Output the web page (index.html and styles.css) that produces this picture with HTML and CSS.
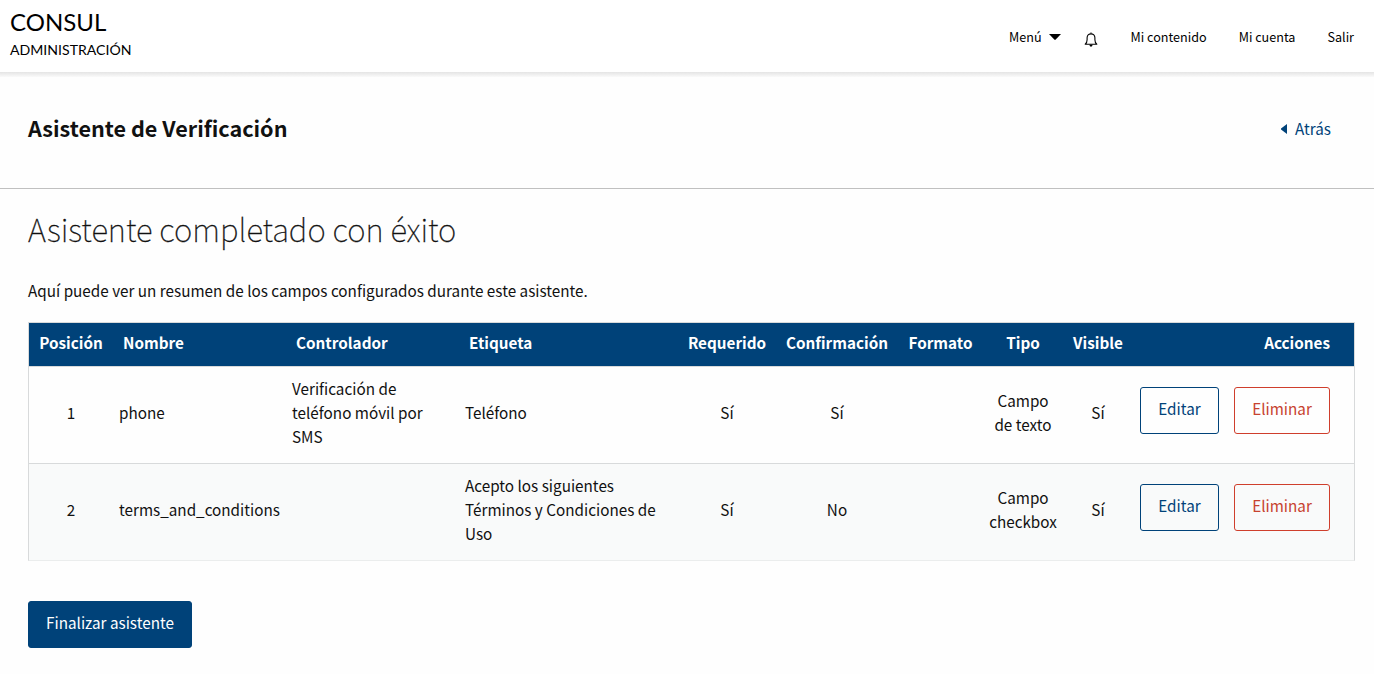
FILE: index.html
```html
<!DOCTYPE html>
<html lang="es">
<head>
<meta charset="utf-8">
<title>Asistente de Verificación</title>
<link rel="stylesheet" href="styles.css">
</head>
<body>
<header class="top">
  <div class="brand">
    <a class="brand-name">CONSUL</a>
    <a class="brand-sub">ADMINISTRACIÓN</a>
  </div>
  <nav class="nav">
    <a class="nav-menu"><span class="t-menu">Menú</span><svg class="caret" width="12" height="6" viewBox="0 0 12 6"><path d="M0 0h12L6.500 5.700h-1z"/></svg></a>
    <svg class="bell" width="14" height="15" viewBox="0 0 14 15" fill="none" stroke="#000" stroke-width="1.1" stroke-linejoin="round"><path d="M7 .4v1.4M1.2 12.200h11.600c-1.300-1-1.900-2.300-1.900-4.400V5.800C10.900 3.500 9.300 1.900 7 1.900S3.100 3.500 3.100 5.800v2c0 2.100-.6 3.400-1.900 4.400z"/><path d="M5.300 12.800h3.400l-.8 1.600H6.100z" fill="#000" stroke="none"/></svg>
    <a class="t-contenido">Mi contenido</a>
    <a class="t-cuenta">Mi cuenta</a>
    <a class="t-salir">Salir</a>
  </nav>
</header>
<section class="title-bar">
  <h2 class="title"><span>Asistente de Verificación</span></h2>
  <a class="back"><svg width="6" height="10" viewBox="0 0 6 10"><path d="M6 0v10L0 5.500v-1z" fill="#004279"/></svg><span>Atrás</span></a>
</section>
<main class="main">
  <h1 class="heading"><span>Asistente completado con éxito</span></h1>
  <p class="intro"><span>Aquí puede ver un resumen de los campos configurados durante este asistente.</span></p>
  <table class="fields">
    <colgroup><col class="c-pos"><col class="c-name"><col class="c-name"><col class="c-label"><col class="c-req"><col class="c-conf"><col class="c-fmt"><col class="c-type"><col class="c-vis"><col class="c-act"></colgroup>
    <thead>
      <tr><th class="mid">Posición</th><th>Nombre</th><th>Controlador</th><th>Etiqueta</th><th class="mid">Requerido</th><th class="mid">Confirmación</th><th class="mid">Formato</th><th class="mid">Tipo</th><th class="mid">Visible</th><th class="end">Acciones</th></tr>
    </thead>
    <tbody>
      <tr><td class="mid">1</td><td>phone</td><td>Verificación de<br>teléfono móvil por<br>SMS</td><td>Teléfono</td><td class="mid">Sí</td><td class="mid">Sí</td><td></td><td class="mid">Campo<br>de texto</td><td class="mid">Sí</td><td class="cell-actions"><div class="actions"><a class="button edit">Editar</a><a class="button delete">Eliminar</a></div></td></tr>
      <tr><td class="mid">2</td><td>terms_and_conditions</td><td></td><td>Acepto los siguientes<br>Términos y Condiciones de<br>Uso</td><td class="mid">Sí</td><td class="mid">No</td><td></td><td class="mid">Campo<br>checkbox</td><td class="mid">Sí</td><td class="cell-actions"><div class="actions"><a class="button edit">Editar</a><a class="button delete">Eliminar</a></div></td></tr>
    </tbody>
  </table>
  <a class="button finish">Finalizar asistente</a>
</main>
</body>
</html>
```
FILE: styles.css
```css
* { box-sizing: border-box; }
body {
  margin: 0;
  background: #fefefe;
  color: #111;
  font: 15.270px/24px "Noto Sans CJK SC", "Noto Sans", sans-serif;
  white-space: nowrap;
}
.top {
  height: 72px;
  display: flex;
  justify-content: space-between;
  background: #fff;
  color: #000;
}
.brand { padding: 4px 10px; display: flex; flex-direction: column; font-family: Lato, sans-serif; }
.brand-name { font-size: 24px; line-height: 36px; }
.brand-sub { font-size: 14.100px; line-height: 20px; }
.nav { display: flex; align-items: center; padding: 1px 20px 0 0; font-size: 12.600px; }
.nav-menu { display: flex; align-items: center; gap: 7px; margin-right: 23px; }
.bell { margin: 5px 33px 0 0; }
.t-contenido, .t-cuenta { margin-right: 32px; }
.title-bar {
  height: 117px;
  padding: 0 43px 4px 28px;
  display: flex;
  align-items: center;
  justify-content: space-between;
  background: linear-gradient(#e4e4e4, #fafafa) 0 0 / 100% 5px no-repeat;
  border-bottom: 1px solid #c0c0c0;
}
.title { margin: 0; font-size: 21.600px; line-height: 34px; font-weight: 700; }
.back { display: flex; align-items: center; gap: 8px; color: #004279; }
.back svg { margin-top: 2px; }
.main { padding: 14px 19px 0 28px; }
.heading { margin: 0; font-size: 31.170px; line-height: 52px; font-weight: 100; -webkit-text-stroke: .3px #111; }
.intro { margin: 23px 0 20px; }
.fields { width: 1327px; table-layout: fixed; border-collapse: separate; border-spacing: 0; border: 1px solid #d8dadb; border-bottom-color: #ebeded; }
.c-pos { width: 84px; }
.c-name { width: 173px; }
.c-label { width: 219px; }
.c-req { width: 98px; }
.c-conf { width: 122px; }
.c-fmt { width: 85px; }
.c-type { width: 80px; }
.c-vis { width: 70px; }
.c-act { width: 221px; }
.fields th {
  height: 43px;
  padding: 0 10px 5px;
  background: #004279;
  color: #fff;
  font-weight: 700;
  text-align: left;
}
.fields td { height: 97px; padding: 0 6px 6px; border-top: 1px solid #d8dadb; }
.fields tbody tr:last-child { background: #f9fafa; }
.fields .mid { text-align: center; padding-left: 0; padding-right: 0; }
.fields .end { text-align: right; padding-right: 24px; }
.fields .cell-actions { padding-bottom: 9px; }
.actions { display: flex; gap: 15px; padding-left: 1px; }
.button {
  height: 47px;
  display: flex;
  align-items: center;
  justify-content: center;
  padding-bottom: 5px;
  border: 1px solid;
  border-radius: 3px;
}
.edit { width: 79px; color: #004279; }
.delete { width: 96px; color: #c7422f; border-color: #cf3e2c; }
.finish { width: 164px; margin-top: 40px; background: #004279; border-color: #004279; color: #fff; }
```
